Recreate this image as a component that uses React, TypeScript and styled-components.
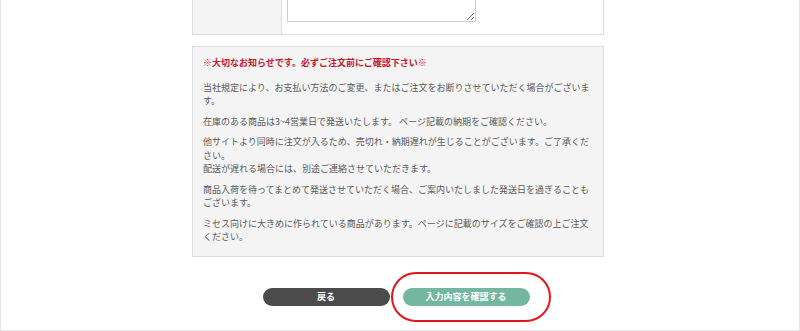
import React, { ReactElement } from 'react'
import styled, { createGlobalStyle } from 'styled-components'

const GlobalStyle = createGlobalStyle`
  html, body {
    margin: 0;
    padding: 0;
    background: #fff;
  }
  body {
    font-family: "Noto Sans CJK JP", "Noto Sans", sans-serif;
    color: #555;
  }
`

const StyledPage = styled.div`
  box-sizing: border-box;
  width: 800px;
  height: 331px;
  overflow: hidden;
  border-left: 1px solid #e6e6e6;
  border-right: 1px solid #e6e6e6;
  border-bottom: 1px solid #e6e6e6;
`

const StyledContent = styled.div`
  width: 412px;
  margin-left: 191px;
`

const StyledFormRow = styled.div`
  display: flex;
  height: 34px;
  border: 1px solid #dcdcdc;
  border-top: none;
`

const StyledLabelCell = styled.div`
  width: 88px;
  background-color: #f4f4f4;
  border-right: 1px solid #dcdcdc;
`

const StyledValueCell = styled.div`
  flex: 1;
  padding: 0 5px;
  background-color: #fff;
`

const StyledTextarea = styled.textarea`
  display: block;
  box-sizing: border-box;
  width: 189px;
  height: 22px;
  margin: 0;
  border: 1px solid #cfcfcf;
  border-top: none;
  background: #fff;
  resize: vertical;
  font-family: inherit;
  outline: none;
`

const StyledNotice = styled.div`
  margin-top: 11px;
  padding: 9px 10px 12px;
  background-color: #f4f4f4;
  border: 1px solid #dcdcdc;
  font-size: 9px;
  line-height: 13.5px;
  color: #5a5a5a;
  line-break: strict;
`

const StyledNoticeTitle = styled.p`
  margin: 0;
  padding-bottom: 4px;
  color: #c8162a;
  font-weight: bold;
`

const StyledNoticeText = styled.p`
  margin: 7px 0 0;
`

const StyledButtons = styled.div`
  display: flex;
  justify-content: center;
  gap: 13px;
  margin-top: 31px;
  padding-right: 4px;
`

const StyledButton = styled.button<{ $variant: 'back' | 'confirm' }>`
  position: relative;
  width: 127px;
  height: 18px;
  padding: 0;
  border: none;
  border-radius: 9px;
  background-color: ${(p) => (p.$variant === 'back' ? '#4b4b4b' : '#74b7a1')};
  color: #fff;
  font-family: "Noto Sans CJK JP", sans-serif;
  font-size: 9px;
  font-weight: bold;
  line-height: 18px;
  cursor: pointer;
`

const StyledHighlight = styled.span`
  position: absolute;
  left: -12px;
  right: -21px;
  top: -16px;
  bottom: -16px;
  border: 2px solid #e8141c;
  border-radius: 26px;
  pointer-events: none;
`

const App = (): ReactElement => {
  return (
    <StyledPage>
      <GlobalStyle />
      <StyledContent>
        <StyledFormRow>
          <StyledLabelCell />
          <StyledValueCell>
            <StyledTextarea />
          </StyledValueCell>
        </StyledFormRow>

        <StyledNotice>
          <StyledNoticeTitle>※大切なお知らせです。必ずご注文前にご確認下さい※</StyledNoticeTitle>
          <StyledNoticeText>
            当社規定により、お支払い方法のご変更、またはご注文をお断りさせていただく場合がございます。
          </StyledNoticeText>
          <StyledNoticeText>
            在庫のある商品は3~4営業日で発送いたします。 ページ記載の納期をご確認ください。
          </StyledNoticeText>
          <StyledNoticeText>
            他サイトより同時に注文が入るため、売切れ・納期遅れが生じることがございます。ご了承ください。
            <br />
            配送が遅れる場合には、別途ご連絡させていただきます。
          </StyledNoticeText>
          <StyledNoticeText>
            商品入荷を待ってまとめて発送させていただく場合、ご案内いたしました発送日を過ぎることもございます。
          </StyledNoticeText>
          <StyledNoticeText>
            ミセス向けに大きめに作られている商品があります。ページに記載のサイズをご確認の上ご注文ください。
          </StyledNoticeText>
        </StyledNotice>

        <StyledButtons>
          <StyledButton $variant="back">戻る</StyledButton>
          <StyledButton $variant="confirm">
            入力内容を確認する
            <StyledHighlight />
          </StyledButton>
        </StyledButtons>
      </StyledContent>
    </StyledPage>
  )
}

export default App
